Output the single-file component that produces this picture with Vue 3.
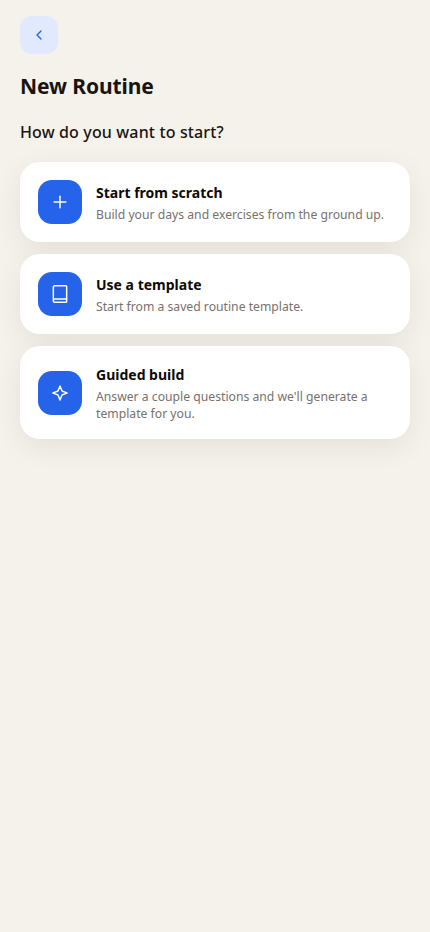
<template>
  <div class="page">
    <button class="back" aria-label="Back">
      <svg width="16" height="16" viewBox="0 0 24 24" fill="none" stroke="currentColor" stroke-width="2" stroke-linecap="round" stroke-linejoin="round">
        <path d="M15 18l-6-6 6-6" />
      </svg>
    </button>
    <h1 class="title">New Routine</h1>
    <h2 class="subtitle">How do you want to start?</h2>
    <div class="options">
      <div v-for="opt in options" :key="opt.title" class="card">
        <div class="iconBox">
          <svg width="20" height="20" viewBox="0 0 24 24" fill="none" stroke="currentColor" stroke-width="1.8" stroke-linecap="round" stroke-linejoin="round">
            <path v-for="d in opt.paths" :key="d" :d="d" />
          </svg>
        </div>
        <div class="text">
          <div class="cardTitle">{{ opt.title }}</div>
          <div class="cardDesc">{{ opt.desc }}</div>
        </div>
      </div>
    </div>
  </div>
</template>

<script setup>
const options = [
  {
    title: "Start from scratch",
    desc: "Build your days and exercises from the ground up.",
    paths: ["M5 12h14", "M12 5v14"],
  },
  {
    title: "Use a template",
    desc: "Start from a saved routine template.",
    paths: [
      "M4 20V4a2 2 0 0 1 2-2h13a1 1 0 0 1 1 1v18a1 1 0 0 1-1 1H6a2 2 0 0 1-2-2zm0 0a2 2 0 0 1 2-2h14",
    ],
  },
  {
    title: "Guided build",
    desc: "Answer a couple questions and we'll generate a template for you.",
    paths: [
      "M12 3.5l1.9 5a2.5 2.5 0 0 0 1.6 1.6l5 1.9-5 1.9a2.5 2.5 0 0 0-1.6 1.6l-1.9 5-1.9-5a2.5 2.5 0 0 0-1.6-1.6l-5-1.9 5-1.9a2.5 2.5 0 0 0 1.6-1.6z",
    ],
  },
];
</script>

<style>
html,
body {
  background: #f5f2eb;
}
</style>

<style scoped>
.page {
  min-height: 932px;
  box-sizing: border-box;
  padding: 16px 20px;
  background: #f5f2eb;
  font-family: "Noto Sans", "Open Sans", sans-serif;
  color: #1a1410;
}

.back {
  display: flex;
  align-items: center;
  justify-content: center;
  width: 38px;
  height: 38px;
  padding: 0;
  border: none;
  border-radius: 12px;
  background: #e0e9fd;
  color: #2563eb;
}

.title {
  margin: 18px 0 0;
  font-size: 21px;
  line-height: 28px;
  font-weight: 700;
  letter-spacing: -0.1px;
}

.subtitle {
  margin: 21px 0 0;
  font-size: 16px;
  line-height: 22px;
  font-weight: 500;
  letter-spacing: 0.14px;
}

.options {
  display: flex;
  flex-direction: column;
  gap: 12px;
  margin-top: 19px;
}

.card {
  display: flex;
  align-items: center;
  gap: 14px;
  padding: 18px;
  border-radius: 20px;
  background: #fff;
  box-shadow: 0 8px 30px rgba(26, 20, 16, 0.07);
}

.iconBox {
  flex-shrink: 0;
  display: flex;
  align-items: center;
  justify-content: center;
  width: 44px;
  height: 44px;
  border-radius: 14px;
  background: #2563eb;
  color: #fff;
}

.text {
  min-width: 0;
  margin-top: 1px;
  margin-bottom: -1px;
}

.cardTitle {
  font-size: 14px;
  line-height: 20px;
  font-weight: 700;
  color: #0d0a08;
}

.cardDesc {
  margin-top: 3px;
  font-size: 12.2px;
  line-height: 17px;
  color: #78716c;
}
</style>
